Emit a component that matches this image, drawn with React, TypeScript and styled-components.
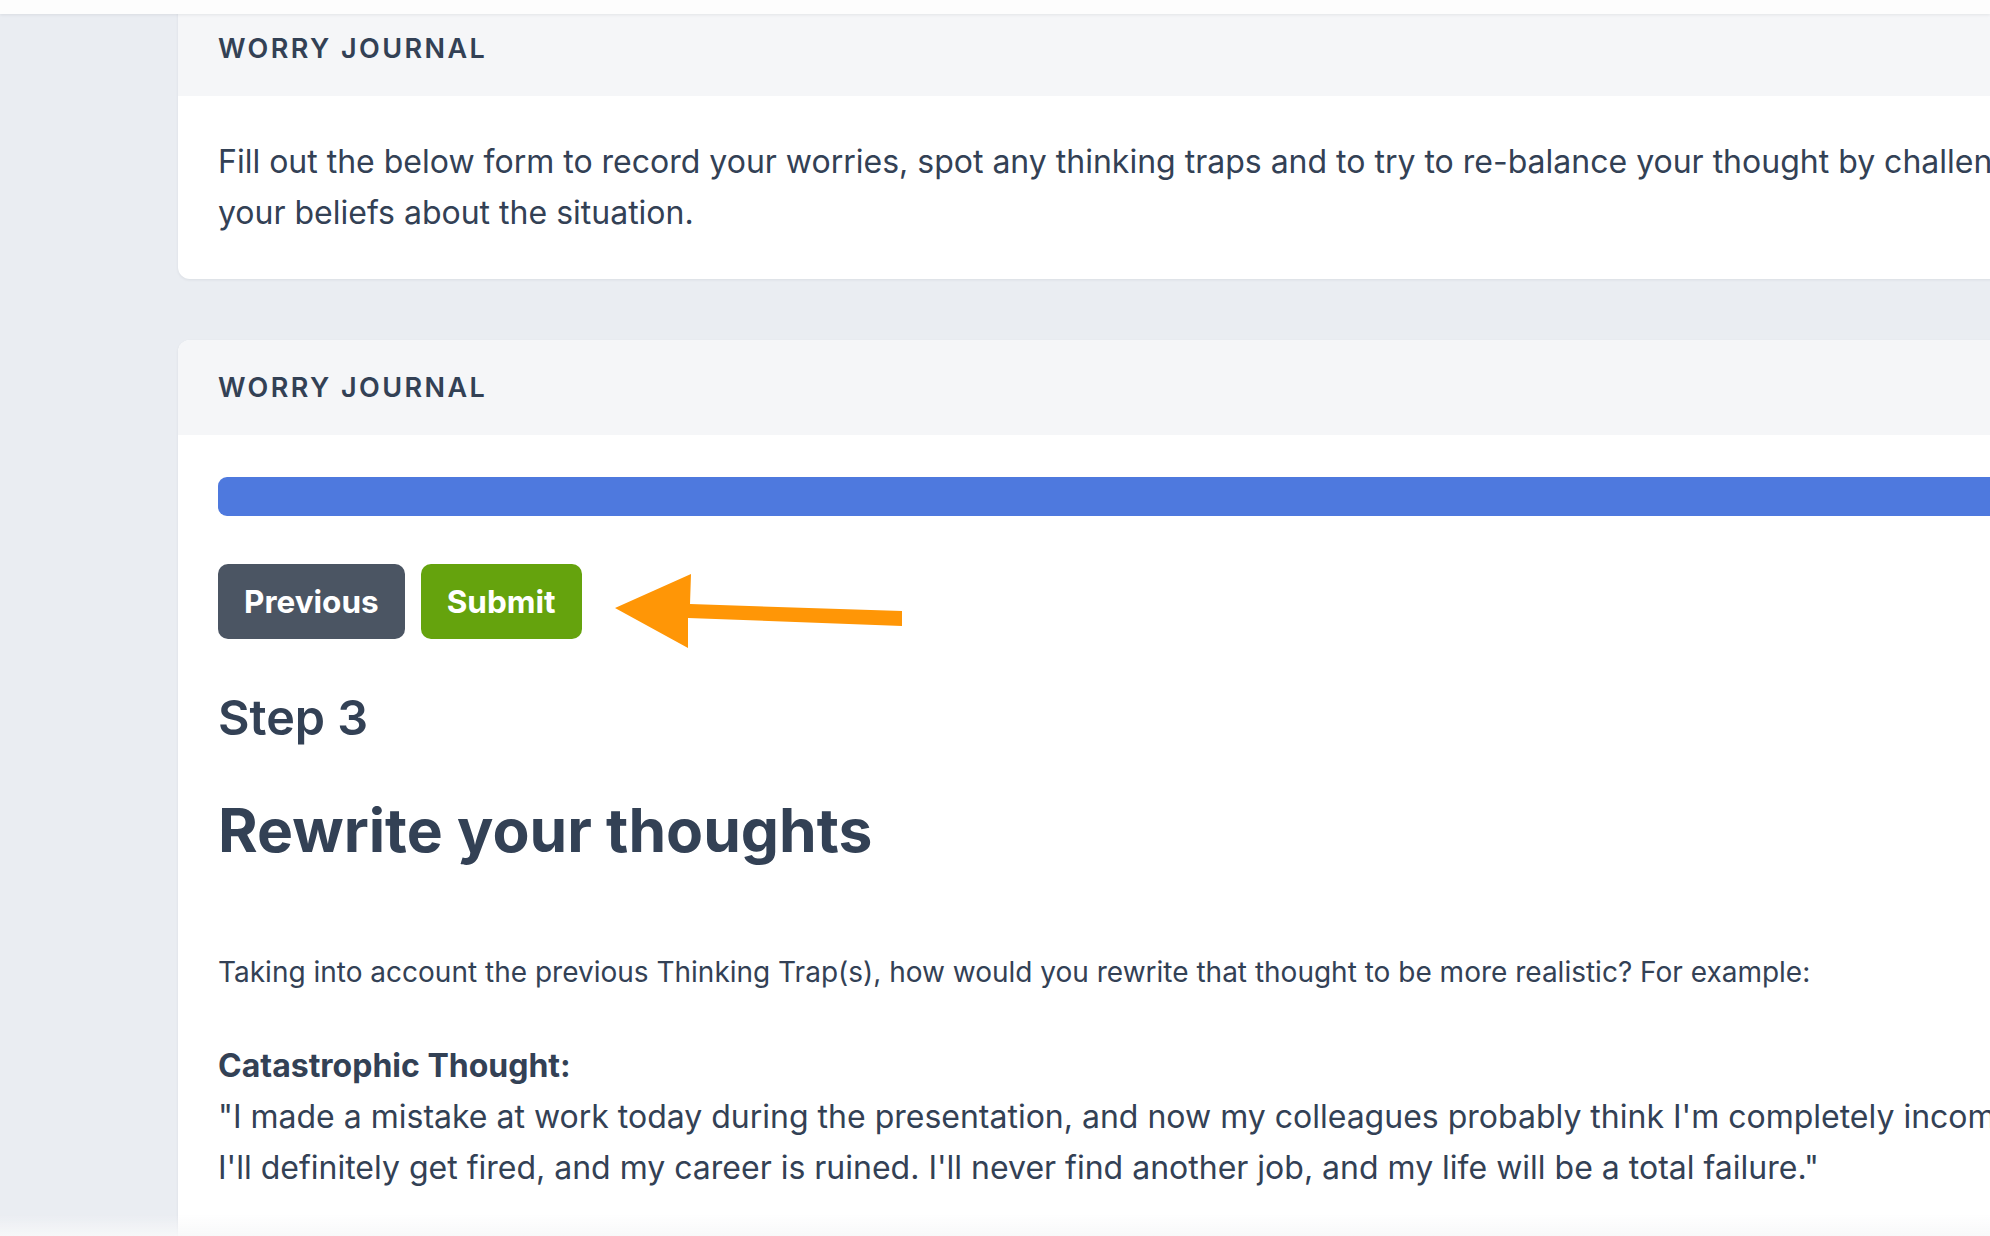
import React from "react";
import styled, { createGlobalStyle } from "styled-components";

const GlobalStyle = createGlobalStyle`
  html, body {
    margin: 0;
    padding: 0;
    overflow: hidden;
    background: #eaedf2;
  }
  body {
    font-family: Inter, "Noto Sans", "Liberation Sans", sans-serif;
    color: #334155;
  }
  * { box-sizing: border-box; }
`;

const TopBar = styled.div`
  position: fixed;
  top: 0;
  left: 0;
  right: 0;
  height: 14px;
  background: #fdfdfd;
  box-shadow: 0 1px 3px rgba(15, 23, 42, 0.08);
  z-index: 10;
`;

const BottomFade = styled.div`
  position: fixed;
  left: 0;
  right: 0;
  bottom: 0;
  height: 22px;
  background: linear-gradient(rgba(250, 250, 251, 0), rgba(247, 248, 249, 0.9));
  z-index: 10;
`;

const Page = styled.main`
  display: flex;
  flex-direction: column;
  gap: 61px;
  padding-left: 178px;
  width: 2200px;
`;

const Card = styled.section<{ $flatTop?: boolean }>`
  width: 1975px;
  background: #ffffff;
  border-radius: ${(p) => (p.$flatTop ? "0 0 12px 12px" : "12px")};
  box-shadow: 0 1px 3px rgba(15, 23, 42, 0.07);
  overflow: hidden;
`;

const CardHeader = styled.header<{ $height: number }>`
  height: ${(p) => p.$height}px;
  display: flex;
  align-items: center;
  padding: 0 40px;
  background: #f5f6f8;
`;

const CardTitle = styled.h2`
  margin: 0;
  font-size: 27px;
  font-weight: 600;
  letter-spacing: 0.09em;
  text-transform: uppercase;
  color: #334155;
`;

const CardBody = styled.div<{ $pt: number; $pb: number }>`
  padding: ${(p) => p.$pt}px 40px ${(p) => p.$pb}px;
  display: flex;
  flex-direction: column;
`;

const Lead = styled.p`
  margin: 0;
  font-size: 32px;
  line-height: 51px;
  color: #334155;
`;

const Progress = styled.div`
  height: 39px;
  border-radius: 9px;
  background: #4e79de;
`;

const ButtonRow = styled.div`
  position: relative;
  display: flex;
  gap: 16px;
  margin-top: 48px;
`;

const Button = styled.button<{ $tone: "gray" | "green" }>`
  height: 75px;
  padding: 0 26px;
  border: none;
  border-radius: 10px;
  font-family: inherit;
  font-size: 31.5px;
  font-weight: 700;
  color: #ffffff;
  background: ${(p) => (p.$tone === "green" ? "#65a30d" : "#4b5563")};
  cursor: pointer;
`;

const ArrowMark = styled.svg`
  position: absolute;
  left: 390px;
  top: 5px;
`;

const StepLabel = styled.h3`
  margin: 48px 0 0;
  font-size: 48.5px;
  line-height: 62px;
  font-weight: 600;
  color: #334155;
`;

const StepTitle = styled.h1`
  margin: 45px 0 0;
  font-size: 60.5px;
  line-height: 72px;
  font-weight: 700;
  color: #334155;
`;

const Prompt = styled.p`
  margin: 86px 0 0;
  font-size: 28px;
  line-height: 40px;
  color: #334155;
`;

const Example = styled.div`
  margin-top: 48px;
  font-size: 32px;
  line-height: 51px;
  color: #334155;
`;

const ExampleLabel = styled.strong`
  display: block;
  font-weight: 700;
`;

export default function App() {
  return (
    <>
      <GlobalStyle />
      <TopBar />
      <Page>
        <Card $flatTop>
          <CardHeader $height={96}>
            <CardTitle>Worry Journal</CardTitle>
          </CardHeader>
          <CardBody $pt={40} $pb={41}>
            <Lead>
              Fill out the below form to record your worries, spot any thinking traps and to try to
              re-balance your thought by challenging your beliefs about the situation.
            </Lead>
          </CardBody>
        </Card>
        <Card>
          <CardHeader $height={95}>
            <CardTitle>Worry Journal</CardTitle>
          </CardHeader>
          <CardBody $pt={42} $pb={80}>
            <Progress />
            <ButtonRow>
              <Button $tone="gray">Previous</Button>
              <Button $tone="green">Submit</Button>
              <ArrowMark width="300" height="85" viewBox="0 0 300 85" aria-hidden="true">
                <polygon
                  points="7,39 83,5 82,35 294,42 294,57 80,49 80,79"
                  fill="#ff9606"
                />
              </ArrowMark>
            </ButtonRow>
            <StepLabel>Step 3</StepLabel>
            <StepTitle>Rewrite your thoughts</StepTitle>
            <Prompt>
              Taking into account the previous Thinking Trap(s), how would you rewrite that thought to
              be more realistic? For example:
            </Prompt>
            <Example>
              <ExampleLabel>Catastrophic Thought:</ExampleLabel>
              "I made a mistake at work today during the presentation, and now my colleagues probably
              think I'm completely incompetent. I'll definitely get fired, and my career is ruined.
              I'll never find another job, and my life will be a total failure."
            </Example>
          </CardBody>
        </Card>
      </Page>
      <BottomFade />
    </>
  );
}
